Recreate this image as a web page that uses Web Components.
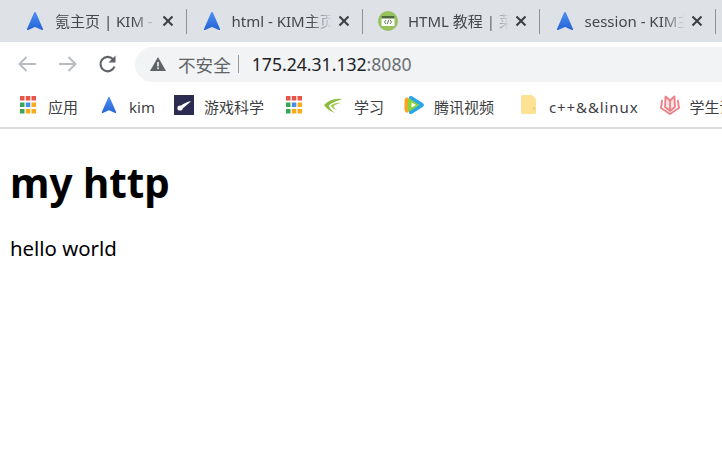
<!DOCTYPE html>
<html lang="zh">
<head>
<meta charset="utf-8">
<title>my http</title>
<style>
  html, body { margin: 0; height: 100%; background: #fff; overflow: hidden; }
  body { font-family: "Noto Sans", "Noto Sans CJK SC", sans-serif; }
  svg { display: block; }
</style>
</head>
<body>
<browser-tabs>
  <browser-tab title-text="氪主页 | KIM - 工作台" icon="kim"></browser-tab>
  <browser-tab title-text="html - KIM主页搜索" icon="kim"></browser-tab>
  <browser-tab title-text="HTML 教程 | 菜鸟教程" icon="html"></browser-tab>
  <browser-tab title-text="session - KIM主页" icon="kim"></browser-tab>
</browser-tabs>
<browser-toolbar></browser-toolbar>
<bookmark-bar>
  <bookmark-item icon="apps" gap="12" after="23">应用</bookmark-item>
  <bookmark-item icon="kimSmall" gap="12" after="19">kim</bookmark-item>
  <bookmark-item icon="game" gap="10" after="22">游戏科学</bookmark-item>
  <bookmark-item icon="apps" gap="0" after="22"></bookmark-item>
  <bookmark-item icon="nvidia" gap="12" after="20">学习</bookmark-item>
  <bookmark-item icon="video" gap="10" after="27">腾讯视频</bookmark-item>
  <bookmark-item icon="folder" gap="13" after="21"><span style="letter-spacing:.9px">c++&amp;&amp;linux</span></bookmark-item>
  <bookmark-item icon="book" gap="10" after="0">学生课程</bookmark-item>
</bookmark-bar>
<page-content>
  <h1 slot="title">my http</h1>
  <p slot="body">hello world</p>
</page-content>

<script>
// ---------- iconos ----------
const KIM_PATH = `<defs><linearGradient id="k" x1="0" y1="0" x2="0" y2="1"><stop offset="0" stop-color="#4f90f2"/><stop offset="1" stop-color="#2463d6"/></linearGradient></defs><path d="M9 1C9.500 1 9.800 1.300 10 1.800L17 18c.3.800-.3 1.300-1 1L9 16 2 19c-.7.300-1.300-.2-1-1L8 1.800C8.200 1.300 8.500 1 9 1Z" fill="url(#k)"/>`;
const ICONS = {
  kim: `<svg width="18" height="20" viewBox="0 0 18 20">${KIM_PATH}</svg>`,
  kimSmall: `<svg width="16" height="18" viewBox="0 0 18 20">${KIM_PATH}</svg>`,
  html: `<svg width="20" height="20" viewBox="0 0 20 20"><circle cx="10" cy="10" r="10" fill="#97c15c"/><rect x="3.500" y="5" width="13" height="10" rx="1" fill="#fff"/><rect x="3.500" y="5" width="13" height="2.500" fill="#4f6b3a"/><path d="M8 9 6.500 11 8 13M12 9l1.500 2L12 13M10.700 8.800 9.300 13.200" fill="none" stroke="#4f6b3a" stroke-width=".9"/></svg>`,
  apps: `<svg width="16" height="18" viewBox="0 0 16 18">
    <rect x="0" y="0" width="4.500" height="4.500" fill="#e8534a"/><rect x="5.800" y="0" width="4.500" height="4.500" fill="#e8534a"/><rect x="11.500" y="0" width="4.500" height="4.500" fill="#e8534a"/>
    <rect x="0" y="6.500" width="4.500" height="4.500" fill="#3aa757"/><rect x="5.800" y="6.500" width="4.500" height="4.500" fill="#4a90e2"/><rect x="11.500" y="6.500" width="4.500" height="4.500" fill="#f9ab1c"/>
    <rect x="0" y="13" width="4.500" height="4.500" fill="#3aa757"/><rect x="5.800" y="13" width="4.500" height="4.500" fill="#f9ab1c"/><rect x="11.500" y="13" width="4.500" height="4.500" fill="#f9ab1c"/></svg>`,
  game: `<svg width="20" height="20" viewBox="0 0 20 20"><rect width="20" height="20" fill="#2c2b52"/><circle cx="6" cy="13" r="2.600" fill="#fff"/><path d="M6.500 11C9.500 8.500 13 7 17 6 14.500 8.500 12 11 8 14Z" fill="#fff"/></svg>`,
  nvidia: `<svg width="18" height="15" viewBox="0 0 18 15"><path d="M18 1C11 0 5 2 0 7c2.500 3.500 6 6.500 11 8C7.500 12.500 5.500 10 4.800 7.500 8 4.800 12.500 2.800 18 1Z" fill="#8dbb3c"/><path d="M17 5C13 4.300 9 5.500 6.500 8c1.800 2.300 4 3.500 6.500 4-1.800-1.200-3-2.500-3.300-3.800C11.500 6.500 14 5.500 17 5Z" fill="#a5cc58"/></svg>`,
  video: `<svg width="20" height="20" viewBox="0 0 20 20"><path d="M5 2.500C5 1 6.500.5 8 1.300L18.700 8c1.700 1 1.700 3 0 4L8 18.700C6.500 19.500 5 19 5 17.500Z" fill="#2aa6ea"/><path d="M.5 6C.5 3 2 2 4 2.500L9 10 4 17.500C2 18 .5 17 .5 14Z" fill="#f6a623"/><path d="M4 5C4 4 5 3.500 6 4l9.500 6L6 16c-1 .5-2 0-2-1Z" fill="#8ed13f"/><path d="M7.500 7.500 12 10 7.500 12.500Z" fill="#fff"/></svg>`,
  folder: `<svg width="15" height="19" viewBox="0 0 15 19"><path d="M1.500 0H11l4 4v13.500a1.500 1.500 0 0 1-1.500 1.500h-12A1.500 1.500 0 0 1 0 17.500V1.500A1.500 1.500 0 0 1 1.500 0Z" fill="#fde293"/><rect x="12.500" y="12.500" width="1" height="2" fill="#d9b04a"/></svg>`,
  book: `<svg width="20" height="20" viewBox="0 0 20 20" fill="none" stroke="#ee7f86" stroke-width="1.800" stroke-linejoin="round"><path d="M10 5.500 5.500 1.500 5 12l5 4 5-4-.5-10.500Z" fill="#fce3e4"/><path d="M10 5.500V16"/><path d="M2.200 5 1 13l9 6 9-6-1.200-8"/></svg>`
};

// ---------- pestañas ----------
class BrowserTabs extends HTMLElement {
  constructor() {
    super();
    this.attachShadow({ mode: "open" });
    this.shadowRoot.innerHTML = `
    <style>
      :host { display: flex; height: 42px; background: #dee1e6; padding-left: 10px; overflow: hidden; }
    </style>
    <slot></slot>`;
  }
}

class BrowserTab extends HTMLElement {
  constructor() {
    super();
    this.attachShadow({ mode: "open" });
  }
  connectedCallback() {
    this.shadowRoot.innerHTML = `
    <style>
      :host { display: flex; align-items: center; flex: 0 0 176.500px; width: 176.500px; min-width: 0; box-sizing: border-box; height: 42px; padding: 0 13px 0 15px; position: relative; color: #45474a; font-size: 15px; }
      :host::after { content: ""; position: absolute; right: 0; top: 9px; height: 25px; width: 1px; background: #8f9296; }
      .ico { flex: none; width: 20px; display: flex; justify-content: center; margin-right: 10px; }
      .txt { flex: 1; min-width: 0; overflow: hidden; white-space: nowrap; line-height: 20px;
             -webkit-mask-image: linear-gradient(to right, #000 78%, transparent 100%); mask-image: linear-gradient(to right, #000 78%, transparent 100%); }
      .cerrar { flex: none; margin-left: 6px; }
    </style>
    <span class="ico">${ICONS[this.getAttribute("icon")]}</span>
    <span class="txt">${this.getAttribute("title-text")}</span>
    <svg class="cerrar" width="12" height="12" viewBox="0 0 12 12"><path d="M1.500 1.500l9 9M10.500 1.500l-9 9" stroke="#3c4043" stroke-width="2.100"/></svg>`;
  }
}

// ---------- barra de navegación ----------
class BrowserToolbar extends HTMLElement {
  constructor() {
    super();
    this.attachShadow({ mode: "open" });
    this.shadowRoot.innerHTML = `
    <style>
      :host { display: flex; align-items: center; height: 44px; background: #fff; padding-left: 18px; box-sizing: border-box; }
      .nav { flex: none; display: block; }
      .omni { flex: 1; display: flex; align-items: center; height: 35px; margin-left: 17px; margin-right: -40px; padding-left: 15px; background: #f1f3f4; border-radius: 18px; font-size: 17.600px; }
      .aviso { color: #5f6368; margin-left: 12px; }
      .sep { width: 1px; height: 18px; background: #9a9da0; margin: 0 13px 0 7px; }
      .host { color: #202124; }
      .puerto { color: #6b6f73; }
    </style>
    <svg class="nav" width="20" height="20" viewBox="0 0 20 20"><path d="M18 10H1.500M8.500 3l-7 7 7 7" fill="none" stroke="#b9bcc0" stroke-width="2"/></svg>
    <svg class="nav" style="margin-left:20px" width="20" height="20" viewBox="0 0 20 20"><path d="M1 10h16.500M10.500 3l7 7-7 7" fill="none" stroke="#b9bcc0" stroke-width="2"/></svg>
    <svg class="nav" style="margin-left:20px" width="20" height="20" viewBox="0 0 20 20"><path d="M16.500 12.500A7.200 7.200 0 1 1 15 5.200" fill="none" stroke="#5f6368" stroke-width="2.200"/><path d="M17.500 1.500v7h-7Z" fill="#5f6368"/></svg>
    <div class="omni">
      <svg width="16" height="14" viewBox="0 0 16 14"><path d="M8 0 16 14H0Z" fill="#5f6368"/><rect x="7.200" y="5" width="1.600" height="4.500" fill="#f1f3f4"/><rect x="7.200" y="10.500" width="1.600" height="1.600" fill="#f1f3f4"/></svg>
      <span class="aviso">不安全</span><span class="sep"></span>
      <span><span class="host">175.24.31.132</span><span class="puerto">:8080</span></span>
    </div>`;
  }
}

// ---------- marcadores ----------
class BookmarkBar extends HTMLElement {
  constructor() {
    super();
    this.attachShadow({ mode: "open" });
    this.shadowRoot.innerHTML = `
    <style>
      :host { display: flex; align-items: center; height: 43px; box-sizing: border-box; background: #fff; border-bottom: 2px solid #dadbdd; padding-left: 20px; overflow: hidden; white-space: nowrap; }
    </style>
    <slot></slot>`;
  }
}

class BookmarkItem extends HTMLElement {
  constructor() {
    super();
    this.attachShadow({ mode: "open" });
  }
  connectedCallback() {
    this.shadowRoot.innerHTML = `
    <style>
      :host { display: flex; align-items: center; flex: none; margin-right: ${this.getAttribute("after")}px; color: #3c4043; font-size: 15px; line-height: 20px; }
      .ico { flex: none; margin-right: ${this.getAttribute("gap")}px; }
    </style>
    <span class="ico">${ICONS[this.getAttribute("icon")]}</span><slot></slot>`;
  }
}

// ---------- contenido ----------
class PageContent extends HTMLElement {
  constructor() {
    super();
    this.attachShadow({ mode: "open" });
    this.shadowRoot.innerHTML = `
    <style>
      :host { display: block; padding: 0 10px; color: #000; }
      ::slotted(h1) { margin: 27px 0 0; font-size: 40.400px; line-height: 54px; font-weight: 700; }
      ::slotted(p) { margin: 23px 0 0; font-size: 20.400px; line-height: 30px; }
    </style>
    <slot name="title"></slot>
    <slot name="body"></slot>`;
  }
}

customElements.define("browser-tabs", BrowserTabs);
customElements.define("browser-tab", BrowserTab);
customElements.define("browser-toolbar", BrowserToolbar);
customElements.define("bookmark-bar", BookmarkBar);
customElements.define("bookmark-item", BookmarkItem);
customElements.define("page-content", PageContent);
</script>
</body>
</html>
